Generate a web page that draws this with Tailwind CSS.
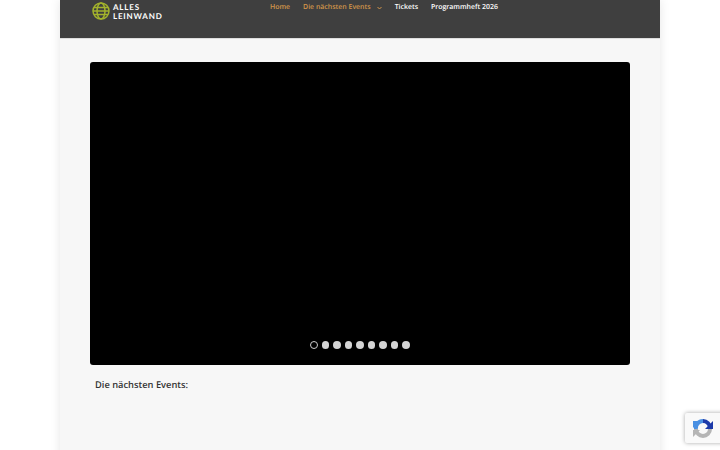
<!DOCTYPE html>
<html lang="de">
<head>
    <meta charset="UTF-8">
    <title>Alles Leinwand</title>
    <script src="https://cdn.jsdelivr.net/npm/@tailwindcss/browser@4"></script>
</head>
<body class="bg-white h-[450px] overflow-hidden font-['Open_Sans',sans-serif] [text-rendering:geometricPrecision]">
    <div class="w-[600px] h-[470px] mx-auto bg-[#f7f7f7] shadow-[0_0_10px_rgba(0,0,0,0.1)]">
        <!-- header -->
        <header class="h-[38px] bg-[#3f3f3f] flex items-start shadow-[0_1px_0_rgba(0,0,0,0.1)]">
            <div class="w-[210px] pl-[32px] pt-[2px] flex items-center gap-[3px]">
                <svg class="w-[18px] h-[18px] shrink-0" viewBox="0 0 18 18" fill="none" stroke="#a3b32c" stroke-width="1.5">
                    <circle cx="9" cy="9" r="8"/>
                    <ellipse cx="9" cy="9" rx="4" ry="8"/>
                    <path d="M2 5.5h14M1 9h16M2 12.5h14"/>
                </svg>
                <div class="mt-[0.5px] text-white font-bold text-[8px] leading-[9px] tracking-[0.8px] font-['Lato',sans-serif]">
                    <div>ALLES</div>
                    <div>LEINWAND</div>
                </div>
            </div>
            <nav class="mt-[1px] flex items-center gap-[13px] h-[13px] text-[6.95px] font-semibold text-white leading-[13px]">
                <a class="text-[#d2954a]">Home</a>
                <a class="text-[#d2954a] flex items-center gap-[6px]">Die nächsten Events
                    <svg class="w-[5px] h-[4px]" viewBox="0 0 5 4" fill="none" stroke="#d2954a" stroke-width="1"><path d="M0.5 1l2 2 2-2"/></svg>
                </a>
                <a>Tickets</a>
                <a>Programmheft 2026</a>
            </nav>
        </header>

        <main class="px-[30px] pt-[23.5px]">
            <!-- slider -->
            <div class="h-[303.5px] bg-black rounded-[3px] flex items-end justify-center pb-[16.5px]">
                <div class="flex gap-[4px]">
                    <span class="w-[7.5px] h-[7.5px] rounded-full border border-[#ccc]"></span>
                    <span class="w-[7.5px] h-[7.5px] rounded-full bg-[#d4d4d4]"></span>
                    <span class="w-[7.5px] h-[7.5px] rounded-full bg-[#d4d4d4]"></span>
                    <span class="w-[7.5px] h-[7.5px] rounded-full bg-[#d4d4d4]"></span>
                    <span class="w-[7.5px] h-[7.5px] rounded-full bg-[#d4d4d4]"></span>
                    <span class="w-[7.5px] h-[7.5px] rounded-full bg-[#d4d4d4]"></span>
                    <span class="w-[7.5px] h-[7.5px] rounded-full bg-[#d4d4d4]"></span>
                    <span class="w-[7.5px] h-[7.5px] rounded-full bg-[#d4d4d4]"></span>
                    <span class="w-[7.5px] h-[7.5px] rounded-full bg-[#d4d4d4]"></span>
                </div>
            </div>
            <h2 class="pl-[5px] pt-[11.5px] text-[9.3px] leading-[15px] font-semibold text-[#333]">Die nächsten Events:</h2>
        </main>
    </div>

    <!-- recaptcha badge -->
    <div class="fixed left-[685px] top-[413px] w-[60px] h-[30px] bg-[#f9f9f9] rounded-[2px] shadow-[0_0_4px_rgba(0,0,0,0.35)] pl-[7px] pt-[4px]">
        <svg class="w-[22px] h-[22px]" viewBox="0 0 22 22" fill="none" stroke-width="4">
            <path d="M4 12a7 7 0 0 1 7-8" stroke="#4a90e2"/>
            <path d="M11 4a7 7 0 0 1 7 7" stroke="#1c3aa9"/>
            <path d="M18 12a7 7 0 0 1-7 7 7 7 0 0 1-7-7" stroke="#b5b5b5"/>
            <path d="M21 4v8h-8z" fill="#1c3aa9" stroke="none"/>
            <path d="M1 4l7 0-7 7z" fill="#4a90e2" stroke="none"/>
            <path d="M1 20v-7h7z" fill="#b5b5b5" stroke="none"/>
        </svg>
    </div>
</body>
</html>
